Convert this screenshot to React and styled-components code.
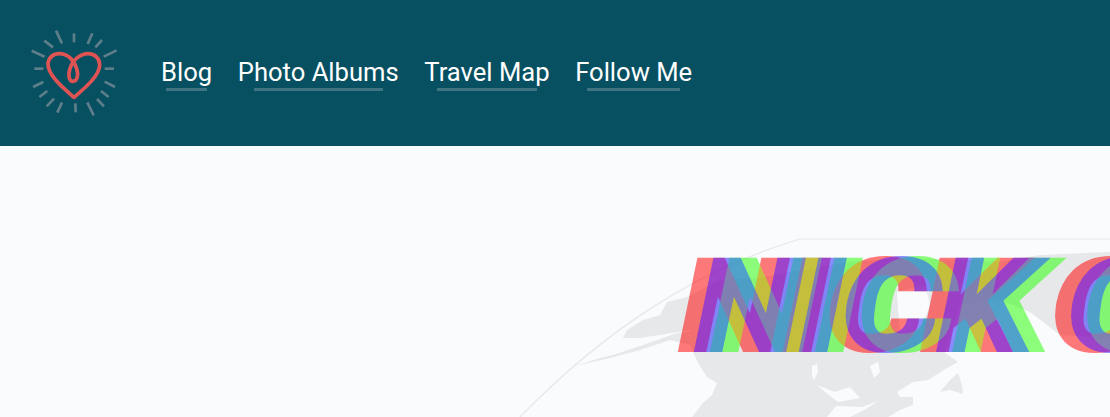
import React from "react";
import styled, { createGlobalStyle } from "styled-components";

const GlobalStyle = createGlobalStyle`
  html, body {
    margin: 0;
    padding: 0;
    background: #fafbfd;
    font-family: Roboto, "Liberation Sans", sans-serif;
  }
`;

const Page = styled.div`
  width: 1110px;
  height: 417px;
  overflow: hidden;
`;

const Header = styled.header`
  display: flex;
  align-items: center;
  gap: 41px;
  height: 146px;
  padding-left: 28px;
  background: #075062;
`;

const Logo = styled.svg`
  width: 92px;
  height: 92px;
  flex: none;
`;

const Nav = styled.nav`
  display: flex;
  gap: 25.6px;
`;

const NavLink = styled.a`
  position: relative;
  padding-bottom: 2px;
  color: #fff;
  font-size: 25.6px;
  line-height: 28px;
  text-decoration: none;

  &::after {
    content: "";
    position: absolute;
    left: 10%;
    bottom: -3px;
    width: 80%;
    height: 3px;
    background: #3f7382;
  }
`;

const Hero = styled.section`
  position: relative;
  height: 271px;
  overflow: hidden;
`;

const MapArt = styled.svg`
  position: absolute;
  top: 0;
  left: 0;
  width: 1110px;
  height: 271px;
`;

const Title = styled.h1`
  position: relative;
  margin: 0;
  height: 271px;
  isolation: isolate;
  font-family: Roboto, "Liberation Sans", sans-serif;
  font-size: 130px;
  font-weight: 900;
  font-style: italic;
  line-height: 144px;
  letter-spacing: -2.5px;
  white-space: nowrap;
`;

const TitleLayer = styled.span`
  position: absolute;
  top: 89px;
  left: ${({ $offset }) => 679 + $offset}px;
  color: ${({ $color }) => $color};
  -webkit-text-stroke: 2px ${({ $color }) => $color};
  opacity: ${({ $alpha }) => $alpha};
  mix-blend-mode: ${({ $mode }) => $mode};
  transform: scaleX(1.2);
  transform-origin: left center;
`;

const rays = [
  [168, 62, 186, 100],
  [222, 70, 222, 97],
  [277, 70, 263, 102],
  [306, 90, 286, 112],
  [350, 121, 311, 140],
  [342, 176, 314, 176],
  [345, 231, 314, 215],
  [326, 261, 303, 243],
  [312, 289, 291, 267],
  [281, 316, 262, 277],
  [227, 307, 226, 280],
  [172, 308, 186, 277],
  [140, 289, 162, 266],
  [118, 261, 142, 243],
  [99, 231, 130, 216],
  [103, 176, 130, 176],
  [95, 122, 134, 140],
  [133, 92, 159, 112],
];

const navItems = ["Blog", "Photo Albums", "Travel Map", "Follow Me"];

const layers = [
  { color: "#ff0000", offset: 0, alpha: 0.52, mode: "screen" },
  { color: "#2eff0e", offset: 32, alpha: 0.55, mode: "screen" },
  { color: "#3d40ff", offset: 16, alpha: 0.6, mode: "hard-light" },
];

const LAND = "#e7e8ea";
const WATER = "#fafbfd";

export default function App() {
  return (
    <Page>
      <GlobalStyle />
      <Header>
        <Logo viewBox="84 51 276 276" fill="none">
          {rays.map(([x1, y1, x2, y2], i) => (
            <line key={i} x1={x1} y1={y1} x2={x2} y2={y2} stroke="#5e7e89" strokeWidth="8" />
          ))}
          <path
            d="M222 262 C195 238 144 198 144 163 C144 143 160 131 178 131 C203 131 222 150 230 176 C237 198 230 214 219 214 C208 214 203 198 210 176 C218 150 240 131 265 131 C284 131 299 145 299 165 C299 198 250 238 222 262 Z"
            stroke="#df5352"
            strokeWidth="11"
            strokeLinejoin="round"
          />
        </Logo>
        <Nav>
          {navItems.map((item) => (
            <NavLink key={item} href="#">
              {item}
            </NavLink>
          ))}
        </Nav>
      </Header>
      <Hero>
        <MapArt viewBox="0 146 1110 271" fill="none">
          <path d="M520 417 C600 335 690 272 800 239 L1110 239" stroke="#e6e7ea" strokeWidth="1.2" />
          <path
            fill={LAND}
            d="M575 366 L600 358 L613 355 L643 345 L677 333 L700 330 L700 345 L712 345 L945 345 L945 353 L958 362 L947 368 L928 380 L913 382 L897 392 L900 397 L913 397 L913 405 L900 410 L888 417 L692 417 L703 403 L712 395 L717 383 L707 377 L698 363 L690 345 L670 340 L640 350 L610 358 Z"
          />
          <path
            fill={LAND}
            d="M623 338 L627 330 L643 320 L660 315 L667 302 L687 297 L720 280 L760 278 L800 270 L850 262 L900 258 L960 260 L1000 262 L1040 255 L1110 252 L1110 338 L1060 335 L1030 312 L1000 300 L960 305 L945 350 L700 350 L690 330 L660 335 L640 338 Z"
          />
          <path fill={LAND} d="M940 392 L950 380 L958 373 L962 385 L963 394 L950 390 Z" />
          <path fill={WATER} d="M812 366 L817 364 L818 372 L814 380 L812 376 Z" />
          <path fill={WATER} d="M817 385 L835 392 L850 387 L860 398 L838 402 L825 392 Z" />
          <path fill={WATER} d="M827 417 L836 406 L862 407 L878 401 L866 409 L850 417 Z" />
          <path fill={WATER} d="M870 366 L878 362 L880 372 L874 378 Z" />
          <path fill={WATER} d="M897 292 L925 285 L930 305 L920 330 L900 335 Z" />
        </MapArt>
        <Title>
          {layers.map((layer) => (
            <TitleLayer
              key={layer.color}
              $color={layer.color}
              $offset={layer.offset}
              $alpha={layer.alpha}
              $mode={layer.mode}
            >
              NICK C
            </TitleLayer>
          ))}
        </Title>
      </Hero>
    </Page>
  );
}
